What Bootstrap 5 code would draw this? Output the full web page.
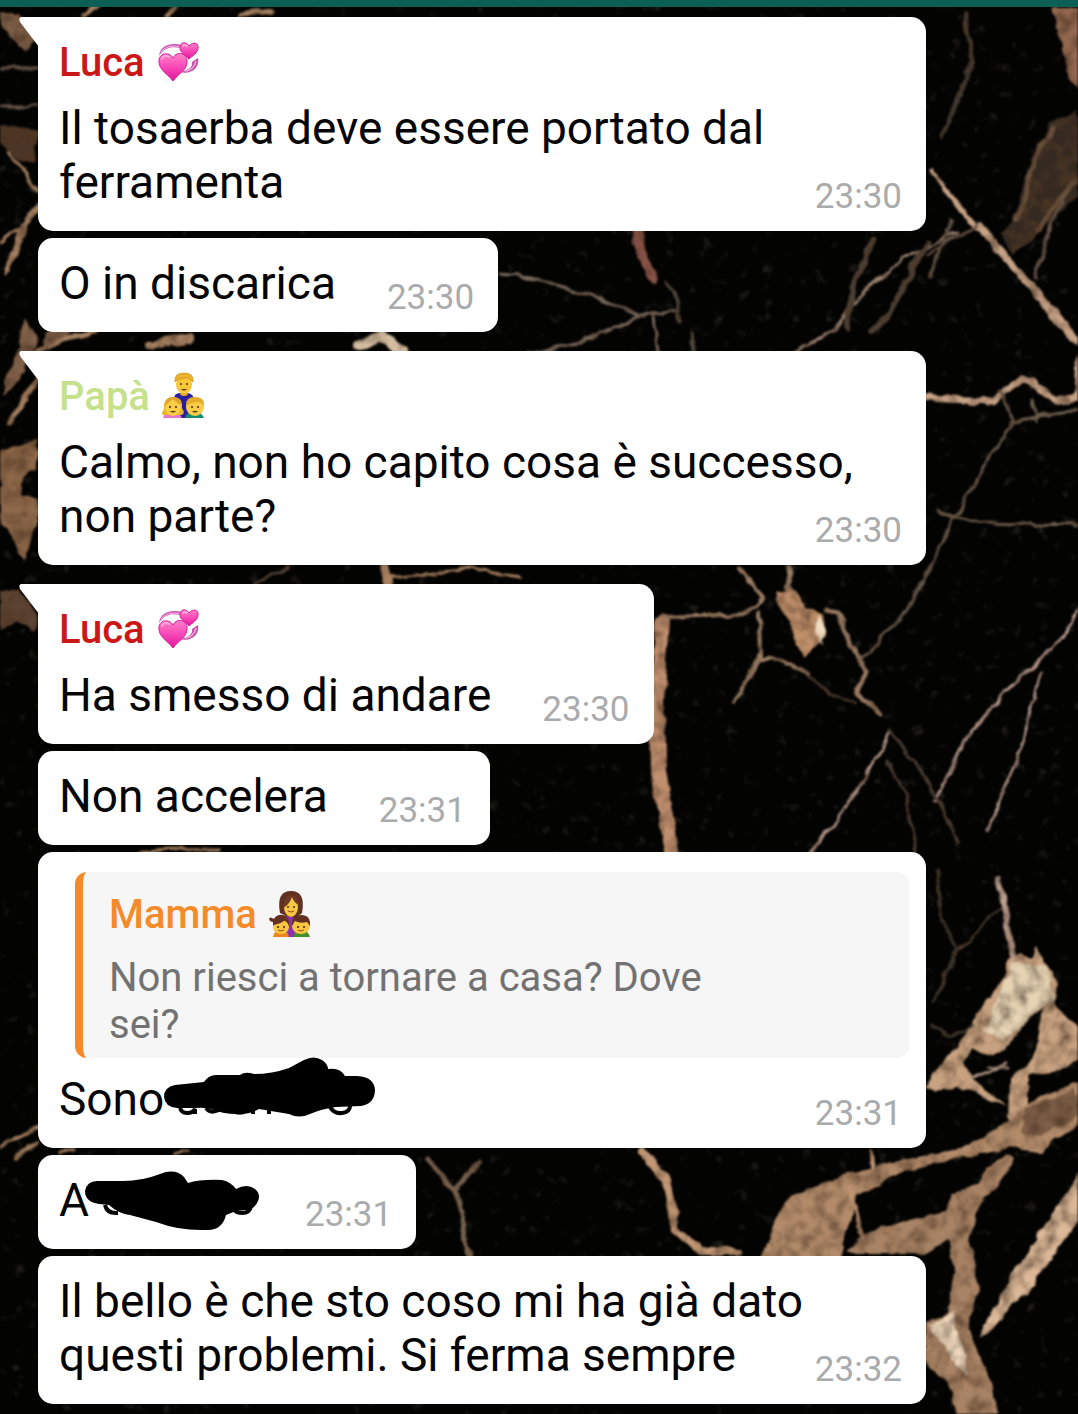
<!DOCTYPE html>
<html lang="it">
<head>
<meta charset="utf-8">
<meta name="viewport" content="width=device-width, initial-scale=1">
<title>Chat di famiglia</title>
<link href="https://cdn.jsdelivr.net/npm/bootstrap@5.3.0/dist/css/bootstrap.min.css" rel="stylesheet">
<style>
body{background:#030302;color:#050505;font-family:Roboto,"Liberation Sans",sans-serif;font-size:46px;line-height:54px}
.app-bar{height:7px;background:#0b5f55}
.wallpaper{z-index:-1}
.chat{padding:10px 152px 10px 38px;gap:7px}
.bubble{background:#fff;border-radius:15px;padding:18px 24px 13px 21px;max-width:100%}
.bubble.first{border-top-left-radius:0}
.bubble.first::before{content:"";position:absolute;left:-19px;top:0;width:20px;height:30px;background:#fff;clip-path:path("M3 0H20V30L1 5Q-1 0 3 0Z")}
.turn{margin-top:12px}
.sender{font-size:40px;line-height:48px;font-weight:500;margin:4px 0 14px;gap:10px}
.luca{color:#cc1717}
.papa{color:#c5e18b}
.mamma{color:#f58a2b;margin:1px 0 15px}
.emoji{width:48px;height:48px;flex:none;overflow:visible}
.stamp{font-size:35px;line-height:42px;color:#a9abad;margin:21px 0 0 51px}
.quoted{background:#f6f6f6;border-left:8px solid #f58a2b;border-radius:12px;margin:2px -7px 14px 16px;padding:18px 150px 10px 26px;color:#727272;font-size:40px;line-height:47px}
.scribble{height:66px;overflow:visible;vertical-align:top}
.scribble.wide{width:212px;margin:-12px 0 0}
.scribble.short{width:165px;margin:-3px 0 -9px}
</style>
<script src="https://cdn.jsdelivr.net/npm/bootstrap@5.3.0/dist/js/bootstrap.bundle.min.js"></script>
</head>
<body>
<svg class="wallpaper position-absolute top-0 start-0 w-100 h-100" viewBox="0 0 1078 1414" preserveAspectRatio="xMidYMid slice" aria-hidden="true">
<defs>
<filter id="rough" x="0" y="0" width="1078" height="1414" filterUnits="userSpaceOnUse">
<feTurbulence type="fractalNoise" baseFrequency=".05" numOctaves="3" seed="4" result="n"/>
<feDisplacementMap in="SourceGraphic" in2="n" scale="9" xChannelSelector="R" yChannelSelector="G" result="d"/>
<feTurbulence type="fractalNoise" baseFrequency=".07" numOctaves="4" seed="9"/>
<feColorMatrix values="0 0 0 0 .08  0 0 0 0 .04  0 0 0 0 .02  1.8 0 0 0 -.68" result="dark"/>
<feComposite in="dark" in2="d" operator="in" result="shade"/>
<feMerge result="m"><feMergeNode in="d"/><feMergeNode in="shade"/></feMerge>
<feGaussianBlur in="m" stdDeviation="1"/>
</filter>
<filter id="dust" x="0" y="0" width="100%" height="100%">
<feTurbulence type="fractalNoise" baseFrequency=".08" numOctaves="3" seed="21"/>
<feColorMatrix values="0 0 0 0 .42  0 0 0 0 .38  0 0 0 0 .3  0 3.5 0 0 -2.3"/>
<feGaussianBlur stdDeviation="1"/>
</filter>
</defs>
<rect width="1078" height="1414" fill="#030302"/>
<rect width="1078" height="1414" filter="url(#dust)" opacity=".22"/>
<g filter="url(#rough)" fill="none" stroke-linecap="round" stroke-linejoin="round">
<!-- left edge -->
<g fill="#80604a">
<path d="M0 12L20 14L36 38L24 50L0 26Z"/><path d="M0 125L38 132L34 165L18 160L8 148L0 142Z" fill="#4b3428"/>
<path d="M26 318L38 338L17 385L2 395L12 365Z"/><path d="M0 450L38 440L38 468L22 478L20 495L38 500L38 520L24 560L8 530L0 520Z" fill="#8d6748"/>
<path d="M0 590L22 590L38 615L34 632L16 622L0 628Z" fill="#5c4331"/>
<path d="M48 330Q66 318 92 318L52 346L40 352Z"/>
</g>
<g stroke="#a68162" stroke-width="3">
<path d="M0 68H38M0 106H38" stroke="#665548"/>
<path d="M8 150L28 180L44 196M22 225L6 274M22 225L0 242" />
<path d="M52 192Q38 205 25 225L8 270" stroke-width="5"/>
<path d="M36 380L24 400L10 422" stroke-width="6"/>
<path d="M0 1147L20 1136L38 1128M14 1160L36 1143" stroke-width="4"/>
<path d="M84 16L98 6M166 16L174 6M240 14L272 10" stroke-width="5"/>
<path d="M36 352L62 340L96 332" stroke-width="5"/>
<path d="M150 345L190 338" stroke-width="8"/><path d="M360 345L380 336L402 350" stroke="#d4bda0" stroke-width="10"/>
<path d="M255 584L290 566" stroke="#54483e"/><path d="M385 566L390 584" stroke-width="9"/>
<path d="M390 578L470 569L520 577M140 851L220 849M60 1154L76 1150M175 1154L186 1150" stroke-width="3"/>
</g>
<!-- middle, between the bubbles -->
<g stroke="#77675a" stroke-width="3">
<path d="M498 274L530 277L610 302L640 316L680 311M652 317L658 353M640 316L580 342L530 354"/>
<path d="M637 232L643 257L653 279" stroke="#895247" stroke-width="9"/>
<path d="M667 282L679 302L679 322M690 332L696 354" stroke="#50473e"/>
<path d="M795 354L835 328L865 292L905 257L955 234" stroke="#a38a78"/>
<path d="M874 242L855 277L847 327M927 242L907 279L890 312L872 332" stroke-width="6" stroke="#4c4035"/>
</g>
<!-- upper right -->
<path d="M1052 8L1080 8L1080 92L1070 76Z" fill="#93674f"/>
<path d="M1078 110L1050 122L1028 170L1014 220L1000 235L1012 254L1036 236L1078 195Z" fill="#352b22"/>
<path d="M1054 128L1032 160L1028 195L1016 220M1078 180L1052 208L1038 232" stroke="#6a513c" stroke-width="5"/>
<g stroke="#c8a386">
<path d="M930 170L977 227" stroke-width="5"/><path d="M980 227L1012 264L1052 312L1080 344" stroke-width="8"/>
<path d="M928 254L977 225M1062 202L1047 237L1036 278M930 277L952 222" stroke="#66574a" stroke-width="3"/>
<path d="M964 14L972 62L957 102L942 137" stroke="#40372e" stroke-width="4"/>
<path d="M927 398L992 401L1012 387L1024 378L1034 382L1057 401L1078 397L1080 357" stroke-width="7"/>
<path d="M999 390L1014 420L982 472L952 522L907 612L877 642L862 657" stroke="#63564a" stroke-width="3"/>
<path d="M1014 422L1080 409M937 512L982 523L1080 525M1032 400L1036 420" stroke="#706050" stroke-width="3"/>
</g>
<!-- centre right -->
<g stroke="#997b64" stroke-width="4">
<path d="M663 620L657 700L658 770L672 852" stroke="#c08f6e" stroke-width="14"/>
<path d="M667 617L747 614L764 597L740 570M759 612L760 657L734 702M760 660L782 660L807 674"/>
<path d="M806 676L830 692L855 704" stroke="#3e342c" stroke-width="3"/>
<path d="M787 567L790 597M827 610L838 612L857 657L868 669L857 694L882 714" stroke-width="5"/>
<path d="M890 730L866 777L836 822L808 854M936 800L967 737L1007 690L1062 638L1080 606M1040 672L1024 742L987 832" stroke="#b5988a" stroke-width="3"/>
<path d="M890 730L922 772L942 807L958 842M887 762L907 797L916 852" stroke="#443b31" stroke-width="3"/>
</g>
<path d="M779 590L794 590L808 608L824 615L827 638L814 645L806 657L794 644L792 622L776 606Z" fill="#c0906b"/>
<path d="M819 614L827 628L823 645L815 634Z" fill="#f0dcc0"/>
<!-- lower right -->
<path d="M998 880L1004 904L1014 955" stroke="#bda08e" stroke-width="6"/>
<path d="M928 1090L932 1074L952 1050L966 1034L984 1002L1002 982L1010 958L1020 952L1030 958L1037 945L1046 966L1058 985L1055 1006L1080 1028V1058L1060 1070L1028 1074L1026 1126L1010 1130L1011 1080L1036 1052L1042 1010L1026 1022L1004 1050L986 1054L972 1046L964 1062L972 1080L1008 1106L958 1088Z" fill="#c9a381"/>
<path d="M1014 962L1046 968L1055 1000L1034 1014L1004 1040L984 1032L1002 988Z" fill="#e6d3b4"/>
<path d="M988 1066L1010 1068M970 1078L1008 1064" stroke="#ad9484" stroke-width="3"/>
<path d="M1080 1082L1040 1096L1020 1110L1010 1122L960 1150L902 1160L832 1180L794 1194L774 1222L760 1260H840L855 1196L905 1170L962 1158L1010 1146L1042 1152L1056 1138L1080 1122Z" fill="#b28b6a"/>
<path d="M1024 1108L1076 1090L1078 1116L1040 1136L1020 1134Z" fill="#7e5f47"/>
<path d="M1005 1154L1014 1160L1008 1174L984 1196L974 1218L970 1240L976 1274L978 1292L968 1320L972 1338L994 1388L998 1416H956L950 1384L926 1364V1322L946 1316L954 1268L948 1240L926 1254H846L862 1236L900 1222L946 1212L954 1192L978 1186L984 1172Z" fill="#a98365"/>
<path d="M848 1188L856 1214L866 1240M872 1150L874 1180" stroke="#bf9475" stroke-width="4"/>
<path d="M1080 1172L1054 1212L1026 1254L1000 1298L980 1336L988 1334L1042 1272L1080 1218Z" fill="#dbb897"/>
<path d="M930 1326L952 1314L960 1340L968 1376L946 1350Z" fill="#efd8bc"/>
<path d="M642 1150L666 1182L676 1230L702 1252L737 1252" stroke="#c19775" stroke-width="8"/>
<path d="M427 1160L455 1190L464 1212L462 1232L472 1258M457 1187L480 1162" stroke="#76614e" stroke-width="5"/>
<path d="M1000 907L957 952L932 1002M932 1027L950 1037L972 1027M937 872L942 922L957 947" stroke="#393329" stroke-width="3"/>
</g>
</svg>

<header class="app-bar"></header>
<main class="chat d-flex flex-column align-items-start">
<article class="bubble first position-relative">
<div class="sender luca d-flex"><span>Luca</span>
<svg class="emoji" viewBox="0 0 48 48" role="img" aria-label="cuori che girano">
<defs><linearGradient id="pink" x1="0" y1="0" x2="0" y2="1"><stop stop-color="#ff83c8"/><stop offset=".5" stop-color="#f848b8"/><stop offset="1" stop-color="#df159b"/></linearGradient>
<g id="hearts"><path d="M4 17C5 7 15 3 27 6L25 9C16 7 9 9 4 17Z" fill="#cf55b2"/><path d="M6 13C11 7 18 6 25 8" fill="none" stroke="#f5c2e7" stroke-width="1"/><path d="M43 19C45 29 36 36 25 33C34 31 38 28 37 23Z" fill="#c64fa8"/><path d="M41 22C40 28 35 32 30 32" stroke="#f3b2df" stroke-width="1.5" fill="none"/><path d="M18 42C13 35 4 31 4 23C3 14 14 12 18 19C22 11 33 14 32 23C32 31 24 34 18 42Z" fill="url(#pink)" stroke="#d61c9a"/><path d="M34 20C31 16 25 14 25 9C25 3 31 2 34 7C38 2 44 4 43 9C43 14 37 17 34 20Z" fill="url(#pink)" stroke="#d61c9a"/><path d="M7 20Q9 15 14 18M28 7Q29 5 32 7" stroke="#ffa6dc" stroke-width="2" fill="none" stroke-linecap="round"/></g></defs>
<use href="#hearts"/></svg></div>
<div>Il tosaerba deve essere portato dal ferramenta<time class="stamp float-end">23:30</time></div>
</article>

<article class="bubble"><div>O in discarica<time class="stamp float-end">23:30</time></div></article>

<article class="bubble first turn position-relative">
<div class="sender papa d-flex"><span>Papà</span>
<svg class="emoji" viewBox="0 0 48 48" role="img" aria-label="papà con due bambini">
<path d="M14 45V26Q14 20 20 20H28Q34 21 34 28V45Z" fill="#2b1ca0"/>
<path d="M3 45Q4 39 12 39T22 45Z" fill="#e277cb"/><path d="M25 45Q26 39 34 39T44 45Z" fill="#178b70"/>
<rect x="20" y="16" width="8" height="7" rx="3" fill="#e0a41e"/>
<ellipse cx="24" cy="11" rx="8" ry="10" fill="#f8c839"/><path d="M15 9Q14 0 24 0T33 9L31 7Q28 4 24 5T17 7Z" fill="#edb22b" stroke="#c88a1d" stroke-width=".7"/>
<path d="M4 42Q0 42 4 36Q3 24 13 24T22 35Q26 41 21 42Z" fill="#eab42e"/><ellipse cx="13" cy="34" rx="8" ry="9" fill="#f9cd48"/><path d="M5 33Q8 30 13 26Q17 30 21 32Q20 24 13 24T5 33Z" fill="#dfa329"/>
<ellipse cx="35" cy="34" rx="9" ry="9" fill="#f9cd48"/><path d="M26 33Q25 24 35 24T44 33Q40 28 35 29T26 33Z" fill="#e5ab2b"/>
<g fill="#543412"><circle cx="21" cy="11" r="1"/><circle cx="27" cy="11" r="1"/><circle cx="10" cy="34" r="1.1"/><circle cx="16" cy="34" r="1.1"/><circle cx="32" cy="34" r="1.1"/><circle cx="38" cy="34" r="1.1"/><path d="M21 16H27Q24 19 21 16ZM10 38H16Q13 41 10 38ZM32 38H38Q35 41 32 38Z"/></g>
</svg></div>
<div>Calmo, non ho capito cosa è successo, non parte?<time class="stamp float-end">23:30</time></div>
</article>

<article class="bubble first turn position-relative">
<div class="sender luca d-flex"><span>Luca</span><svg class="emoji" viewBox="0 0 48 48" role="img" aria-label="cuori che girano"><use href="#hearts"/></svg></div>
<div>Ha smesso di andare<time class="stamp float-end">23:30</time></div>
</article>

<article class="bubble"><div>Non accelera<time class="stamp float-end">23:31</time></div></article>

<article class="bubble w-100">
<blockquote class="quoted">
<div class="sender mamma d-flex"><span>Mamma</span>
<svg class="emoji" viewBox="0 0 48 48" role="img" aria-label="mamma con due bambini">
<path d="M15 46V28Q16 23 24 23T33 28V46Z" fill="#8a32ad"/>
<path d="M13 22Q9 0 24 0T35 22Q30 27 24 26T13 22Z" fill="#603020"/><ellipse cx="24" cy="16" rx="7" ry="10" fill="#f6c743"/><path d="M16 17Q22 14 25 6Q27 12 32 14Q31 4 24 4T16 17Z" fill="#6d3826"/>
<path d="M6 46Q7 39 14 39T22 46Z" fill="#ed861e"/><path d="M27 46Q27 39 34 39T43 46Z" fill="#448f28"/>
<path d="M2 28Q3 25 7 28Q10 23 16 24Q23 26 22 35H6V31Q3 31 2 28Z" fill="#633121"/><ellipse cx="14" cy="36" rx="8" ry="7" fill="#f8c641"/><path d="M6 34Q14 33 18 29L22 34Q22 25 14 25T6 34Z" fill="#633121"/>
<ellipse cx="34" cy="35" rx="9" ry="8" fill="#f8c641"/><path d="M25 35Q24 24 34 24T43 35L40 31Q33 33 28 30Z" fill="#633121"/>
<g fill="#4c2b12"><circle cx="21" cy="16" r="1"/><circle cx="27" cy="16" r="1"/><circle cx="11" cy="36" r="1.1"/><circle cx="17" cy="36" r="1.1"/><circle cx="31" cy="36" r="1.1"/><circle cx="37" cy="36" r="1.1"/></g><path d="M21 20Q24 22 27 20M11 39Q14 41 17 39M31 39Q34 41 37 39" fill="none" stroke="#9e4b1c"/>
</svg></div>
<div>Non riesci a tornare a casa? Dove sei?</div>
</blockquote>
<div>Sono<svg class="scribble wide" viewBox="0 0 212 66" role="img" aria-label="testo coperto">
<g fill="none" stroke="#050505" stroke-width="4"><path d="M16 47Q17 53 23 53T31 49V54M42 48Q46 54 55 50M67 49Q72 54 80 52M89 48V54M105 46V54M120 48Q124 54 132 51M166 47Q170 54 178 53T186 46"/></g>
<path d="M13 48Q1 47 0 37Q0 27 11 25L40 22Q45 14 54 15L76 15Q81 11 90 14Q108 14 125 8L140 0Q150-5 158 0Q164 4 164 9Q176 7 181 16L193 16Q211 17 211 31Q210 44 197 46L172 47Q157 49 146 54Q135 59 125 54L95 49Q85 55 73 54Q58 54 47 49Q38 47 32 48Z" fill="#000"/>
</svg><time class="stamp float-end">23:31</time></div>
</article>

<article class="bubble"><div>A<svg class="scribble short" viewBox="0 0 165 66" role="img" aria-label="testo coperto">
<g fill="none" stroke="#050505" stroke-width="4"><path d="M16 35Q18 44 29 43M143 36Q145 43 153 43T162 36"/></g>
<path d="M10 34Q-4 32-4 21Q-2 11 8 11L34 11Q53 11 71 4Q86-2 95 7L99 13Q112 9 133 10Q142 12 147 19Q158 13 166 19Q172 24 169 31Q166 39 158 40L147 41L137 45Q133 61 117 60Q91 61 67 52L41 45Q30 44 20 35Z" fill="#000"/>
</svg><time class="stamp float-end">23:31</time></div></article>

<article class="bubble"><div>Il bello è che sto coso mi ha già dato questi problemi. Si ferma sempre<time class="stamp float-end">23:32</time></div></article>
</main>
</body>
</html>
